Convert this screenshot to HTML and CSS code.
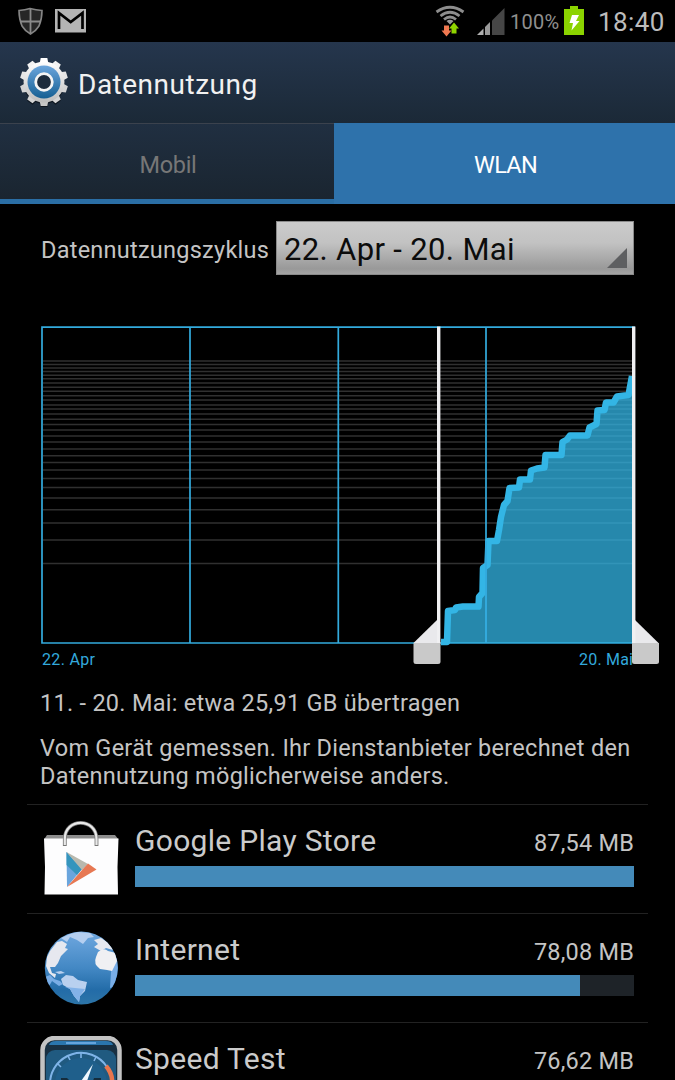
FILE: index.html
```
<!DOCTYPE html>
<html lang="de">
<head>
  <meta charset="UTF-8" />
  <meta name="viewport" content="width=device-width, initial-scale=1.0"/>
  <title>Datennutzung</title>
  <link rel="stylesheet" href="styles.css">
</head>
<body>

  <div class="status-bar">
    <svg class="status-icon" width="26" height="28" viewBox="17 7 26 28">
      <path d="M19 10.500Q25 10 30 8.500Q36 10 42 10.500Q42 19 39 26Q36 31 30.500 34Q25 31 22 26Q19 19 19 10.500Z" fill="#272727" stroke="#858585" stroke-width="1.600"/>
      <path d="M30.500 9V33M20 21.500H41" stroke="#8a8a8a" stroke-width="1.800"/>
    </svg>
    <svg class="status-icon mail" width="31" height="24" viewBox="55 9 31 24">
      <rect x="55" y="9" width="31" height="23.500" fill="#b4b4b4"/>
      <path d="M59 29V13L70.700 22L82.500 13V29" fill="none" stroke="#000" stroke-width="2.700"/>
    </svg>
    <div class="status-right">
      <svg width="70" height="36" viewBox="435 3 70 36">
        <g fill="none" stroke="#8d8d8d" stroke-width="2.800">
          <path d="M436.500 12Q450 2.500 463.500 12"/>
          <path d="M440.500 16Q450 8.500 459.500 16"/>
          <path d="M444 19.500Q450 14.500 456 19.500"/>
        </g>
        <path d="M446.500 21Q450 18.500 453.500 21L450 24.500Z" fill="#999"/>
        <path d="M444 25.500h5v5h2.500l-5 6-5-6h2.500z" fill="#f07850"/>
        <path d="M451.500 33.500v-5h-2.500l5-6 5 6h-2.500v5z" fill="#8fd400"/>
        <path d="M477 35L483.500 28.500V35Z" fill="#b0b0b0"/>
        <path d="M485 35V27L490 22V35Z" fill="#9a9a9a"/>
        <path d="M492 35V20.500L504.500 8V35Z" fill="#464646"/>
      </svg>
      <span class="percent">100%</span>
      <svg class="battery" width="20" height="30" viewBox="564 6 20 30">
        <path d="M564 9H570V6H578V9H584V35H564Z" fill="#8bd300"/>
        <path d="M572 15H579L576 21H579.500L571.500 30.500L573 23H569.500Z" fill="#fff"/>
      </svg>
      <span class="clock">18:40</span>
    </div>
  </div>

  <header>
    <svg width="50" height="50" viewBox="-25 -25 50 50">
      <defs>
        <linearGradient id="gear" x1="0" y1="0" x2="0" y2="1">
          <stop offset="0" stop-color="#fff"/>
          <stop offset="1" stop-color="#bdbdbd"/>
        </linearGradient>
        <linearGradient id="ring" x1="0" y1="0" x2="0" y2="1">
          <stop offset="0" stop-color="#6ba5dc"/>
          <stop offset="1" stop-color="#155f93"/>
        </linearGradient>
        <path id="tooth" d="M-4.500 -18L-3.300 -24H3.300L4.500 -18Z"/>
      </defs>
      <g fill="#0d151e" transform="translate(0 1.300)">
        <circle r="20.500"/>
        <use href="#tooth" transform="rotate(180)"/>
        <use href="#tooth" transform="rotate(144)"/>
        <use href="#tooth" transform="rotate(216)"/>
      </g>
      <g fill="#d4d4d4">
        <use href="#tooth" fill="#fff"/>
        <use href="#tooth" transform="rotate(36)" fill="#f2f2f2"/>
        <use href="#tooth" transform="rotate(72)" fill="#e6e6e6"/>
        <use href="#tooth" transform="rotate(108)"/>
        <use href="#tooth" transform="rotate(144)"/>
        <use href="#tooth" transform="rotate(180)" fill="#c6c6c6"/>
        <use href="#tooth" transform="rotate(216)"/>
        <use href="#tooth" transform="rotate(252)"/>
        <use href="#tooth" transform="rotate(288)" fill="#e6e6e6"/>
        <use href="#tooth" transform="rotate(324)" fill="#f2f2f2"/>
      </g>
      <circle r="20.500" fill="url(#gear)"/>
      <circle r="16.500" fill="url(#ring)"/>
      <circle r="8.300" fill="#1d2c3c" stroke="#f4f4f4" stroke-width="2.800"/>
    </svg>
    <h1>Datennutzung</h1>
  </header>

  <nav>
    <a class="tab">Mobil</a>
    <a class="tab active">WLAN</a>
  </nav>

  <div class="cycle">
    <span class="cycle-label">Datennutzungszyklus</span>
    <div class="spinner">
      <span>22. Apr - 20. Mai</span>
      <svg width="20" height="20" viewBox="0 0 20 20"><path d="M0 20L20 0V20Z" fill="#5e5f61"/></svg>
    </div>
  </div>

  <svg class="chart" width="675" height="360" viewBox="0 316 675 360">
    <path class="grid" d="M43 361H633M43 364.500H633M43 368H633M43 371.500H633M43 375.300H633M43 378.700H633M43 383H633M43 387.300H633M43 391.300H633M43 395.700H633M43 400H633M43 405H633M43 409H633M43 414H633M43 419.300H633M43 424.400H633M43 430H633M43 436H633M43 442H633M43 449H633M43 455.700H633M43 462.500H633M43 470H633M43 478.400H633M43 487.500H633M43 498H633M43 509.700H633M43 523H633M43 540H633M43 563.600H633"/>
    <path class="frame" d="M42 327.200H634V643H42ZM190 327V643M338.300 327V643M486 327V643"/>
    <path class="area" d="M447 643L448 611L455 610L456 607.500L463 606.500H478.500L479 597L482.500 593L483 568L487.500 565L488.500 541H497L499 530L501 517L504 505L507.500 501L509.500 488L519 487.500L520 479.500H530L531 470.500L537 468.500L544.500 467.500L545.500 455H561.500L562.500 442L567 439.500L570 435.500H587.500L589.500 427.500L596.500 424L597.500 410.500L604.500 410L606 402.500H613.500L617 396.500L628.500 395L632 376V643Z"/>
    <path class="line" d="M441 642H447L448 611L455 610L456 607.500L463 606.500H478.500L479 597L482.500 593L483 568L487.500 565L488.500 541H497L499 530L501 517L504 505L507.500 501L509.500 488L519 487.500L520 479.500H530L531 470.500L537 468.500L544.500 467.500L545.500 455H561.500L562.500 442L567 439.500L570 435.500H587.500L589.500 427.500L596.500 424L597.500 410.500L604.500 410L606 402.500H613.500L617 396.500L628.500 395L632 376"/>
    <path d="M486 541V643" stroke="#33a9dc" stroke-width="1.500"/>
    <text class="axis" x="42" y="665" textLength="53">22. Apr</text>
    <text class="axis" x="579" y="665" textLength="54">20. Mai</text>
    <path d="M437 620V643H413.500Z" fill="#e9e9ec"/>
    <path d="M413.500 643H440.500V661.500Q440.500 664 438 664H416Q413.500 664 413.500 661.500Z" fill="#c9c9c9"/>
    <path d="M438.700 326.500V643" stroke="#f0f0f2" stroke-width="3.400"/>
    <path d="M635 620L658.500 643H632V620Z" fill="#e9e9ec"/>
    <path d="M632 643H659V661.500Q659 664 656.500 664H634.500Q632 664 632 661.500Z" fill="#c9c9c9"/>
    <path d="M633.700 326.500V643" stroke="#f0f0f2" stroke-width="3.400"/>
  </svg>

  <p class="summary">11. - 20. Mai: etwa 25,91 GB übertragen</p>
  <p class="note">Vom Gerät gemessen. Ihr Dienstanbieter berechnet den<br>Datennutzung möglicherweise anders.</p>

  <div class="app-list">
    <div class="app">
      <svg class="app-icon" width="82" height="82" viewBox="40 818 82 82">
        <path d="M47 835H115L118.500 839.500H44Z" fill="#8d8d8d"/>
        <path d="M44 838.500H118.500L117.500 867L118 894.500H44.500L45 867Z" fill="#fdfdfe"/>
        <path d="M64.800 846V839C64.800 817.500 96.500 817.500 96.500 839V846" fill="none" stroke="#777" stroke-width="3.800"/>
        <path d="M64.800 845V839C64.800 817.500 96.500 817.500 96.500 839V845" fill="none" stroke="#e9e9e9" stroke-width="2.200"/>
        <path d="M66.500 852L82 869L67 887Z" fill="#6aa5dd"/>
        <path d="M66.500 852L82 869L77 875L66.500 865Z" fill="#3595bd"/>
        <path d="M66.500 852L88 864L82 870Z" fill="#b9b8ad"/>
        <path d="M88 863.500L96.500 869.500L67 887L82 870Z" fill="#e77853"/>
      </svg>
      <div class="app-info">
        <div class="app-text"><span class="name">Google Play Store</span><span class="size">87,54 MB</span></div>
        <div class="bar"><div class="fill" style="width: 100%"></div></div>
      </div>
    </div>

    <div class="app">
      <svg class="app-icon" width="82" height="82" viewBox="40 927 82 82">
        <defs>
          <linearGradient id="sea" x1="0" y1="0" x2="0" y2="1">
            <stop offset="0" stop-color="#70a8e0"/>
            <stop offset=".5" stop-color="#4388c4"/>
            <stop offset=".8" stop-color="#236ca8"/>
            <stop offset="1" stop-color="#2d75a8"/>
          </linearGradient>
          <clipPath id="globe"><circle cx="81.300" cy="968" r="36.500"/></clipPath>
        </defs>
        <circle cx="81.300" cy="968" r="36.500" fill="url(#sea)"/>
        <g clip-path="url(#globe)">
          <path d="M45 977L50 975L54 979L60 981L63 984L59 986L52 981Q47 992 42 980ZM117 948L119 978Q117 987 110 988L111 972Z" fill="#79ade6"/>
          <path d="M50 951L57 942L62 941L67 944L65 948L68 949L61 956L58 963L55 967L50 967L52 973L56 974L55 978L49 973L46 966L47 957Z" fill="#e6e8ef"/>
          <path d="M61 938L70 934L78 932L90 933L94 937L88 938L83 944L77 940L70 937L67 942Z" fill="#b5cff0"/>
          <path d="M94 940L101 938L110 944L113 950L106 948L101 951L94 947L98 944Z" fill="#e6e8ef"/>
          <path d="M98 952Q104 947 108 951L116 953L117 961L112 971L107 970L100 969Q93 964 96 957Z" fill="#f0f0f3"/>
          <path d="M55 972L61 971L65 973L59 974ZM61 979L66 975L73 976L78 980L87 982L85 991L80 996L79 1002L74 996L70 989L63 985Z" fill="#b9d0ef"/>
          <path d="M65 987L85 989L80 996L79 1002L74 996L70 989Z" fill="#83b2e8"/>
        </g>
      </svg>
      <div class="app-info">
        <div class="app-text"><span class="name">Internet</span><span class="size">78,08 MB</span></div>
        <div class="bar"><div class="fill" style="width: 89.2%"></div></div>
      </div>
    </div>

    <div class="app">
      <svg class="app-icon" width="82" height="82" viewBox="40 1036 82 82">
        <rect x="42.500" y="1038" width="77" height="79" rx="12" fill="#183042" stroke="#c3c3c3" stroke-width="4.500"/>
        <path d="M49 1045Q50 1041 56 1041H106Q112 1041 113 1045Z" fill="#2a76ae"/>
        <path d="M66 1042H96V1044H66Z" fill="#65a4dc"/>
        <rect x="46" y="1050" width="70" height="60" rx="9" fill="#205a80"/>
        <circle cx="81" cy="1084" r="26" fill="#1f5f8b"/>
        <path d="M50 1084A31 31 0 0 1 107 1067" fill="none" stroke="#7fb4e8" stroke-width="2"/>
        <path d="M81 1053V1058M68 1056L70 1060M57 1063L61 1067M96 1057L94 1061" stroke="#7fb4e8" stroke-width="1.600"/>
        <path d="M106 1066Q113 1074 112 1084" fill="none" stroke="#e9764d" stroke-width="4.500"/>
        <path d="M61 1078h6l2 2v4h-8zM94 1078h7v6h-9z" fill="#152c3c"/>
        <path d="M93 1064L79 1084H86Z" fill="#eff8ff"/>
      </svg>
      <div class="app-info">
        <div class="app-text"><span class="name">Speed Test</span><span class="size">76,62 MB</span></div>
        <div class="bar"><div class="fill" style="width: 87.5%"></div></div>
      </div>
    </div>
  </div>

</body>
</html>
```

FILE: styles.css
```
* {
  box-sizing: border-box;
}
body {
  margin: 0;
  height: 1080px;
  overflow: hidden;
  font-family: Roboto, sans-serif;
  background: #000;
  color: #c4c4c4;
}
svg {
  display: block;
  flex-shrink: 0;
}
.status-bar {
  height: 42px;
  padding: 0 11px 0 17px;
  display: flex;
  align-items: center;
}
.status-icon.mail {
  margin-left: 12px;
}
.status-right {
  margin-left: auto;
  display: flex;
  align-items: center;
}
.percent {
  width: 50px;
  margin: 1px 4px 0 5px;
  font-size: 20px;
  letter-spacing: 0.3px;
  color: #8f8f8f;
}
.clock {
  width: 66px;
  margin: 1px 0 0 14px;
  font-size: 26px;
  letter-spacing: 0.4px;
  color: #bcbcbc;
}
header {
  height: 81px;
  padding: 0 0 1px 19px;
  display: flex;
  align-items: center;
  background: linear-gradient(#25364d, #1b2937);
}
h1 {
  margin: 4px 0 0 9px;
  font-size: 28px;
  font-weight: 400;
  letter-spacing: 0.5px;
  color: #f1f1f1;
}
nav {
  height: 81px;
  display: flex;
}
.tab {
  width: 334px;
  border-top: 1px solid #3b424d;
  border-bottom: 5px solid #2a6ea5;
  background: linear-gradient(#202f41, #1a2530);
  display: flex;
  align-items: center;
  justify-content: center;
  padding: 7px 0 0 2px;
  font-size: 23.5px;
  letter-spacing: -0.3px;
  color: #777;
}
.tab.active {
  flex: 1;
  border-color: #2e72ab;
  background: #2e72ab;
  letter-spacing: -0.7px;
  color: #fff;
}
.cycle {
  display: flex;
  align-items: center;
  height: 54px;
  margin: 17px 41px 0;
}
.cycle-label {
  width: 235px;
  white-space: nowrap;
  font-size: 23.5px;
  letter-spacing: 0.25px;
  margin-top: 4px;
}
.spinner {
  width: 358px;
  height: 54px;
  padding: 0 6px 6px 7px;
  display: flex;
  align-items: flex-end;
  justify-content: space-between;
  background: linear-gradient(#cbcbcb, #c2c2c2 40%, #999 90%, #a4a4a4);
  border: 1px solid #8a8a8a;
  font-size: 31px;
  line-height: 36px;
  letter-spacing: 0.35px;
  color: #0c0c0c;
  white-space: nowrap;
}
.chart {
  margin-top: 41px;
}
.grid {
  stroke: #303030;
  stroke-width: 1.500;
}
.frame {
  fill: none;
  stroke: #33abdd;
  stroke-width: 1.700;
}
.area {
  fill: #33b5e5;
  fill-opacity: .75;
}
.line {
  fill: none;
  stroke: #33b5e5;
  stroke-width: 6.500;
  stroke-linejoin: round;
}
.axis {
  font-size: 16px;
  fill: #33a9dc;
}
.summary,
.note {
  margin: 0 40px;
  font-size: 23.5px;
  line-height: 28px;
  letter-spacing: 0.27px;
  white-space: nowrap;
}
.summary {
  margin-top: 13px;
}
.note {
  margin-top: 17px;
}
.app-list {
  margin: 14px 27px 0;
}
.app {
  height: 109px;
  padding: 14px 14px 0 13px;
  border-top: 1px solid #222;
  display: flex;
}
.app-icon {
  margin-top: -1px;
}
.app-info {
  flex: 1;
  margin-left: 13px;
}
.app-text {
  height: 47px;
  padding-top: 4px;
  display: flex;
  justify-content: space-between;
  align-items: baseline;
}
.name {
  font-size: 30px;
  letter-spacing: 0.3px;
  color: #cbcbcb;
}
.size {
  font-size: 23.5px;
  letter-spacing: 0.2px;
}
.bar {
  height: 21px;
  background: #1e2328;
}
.fill {
  height: 21px;
  background: #448ab9;
}
```
